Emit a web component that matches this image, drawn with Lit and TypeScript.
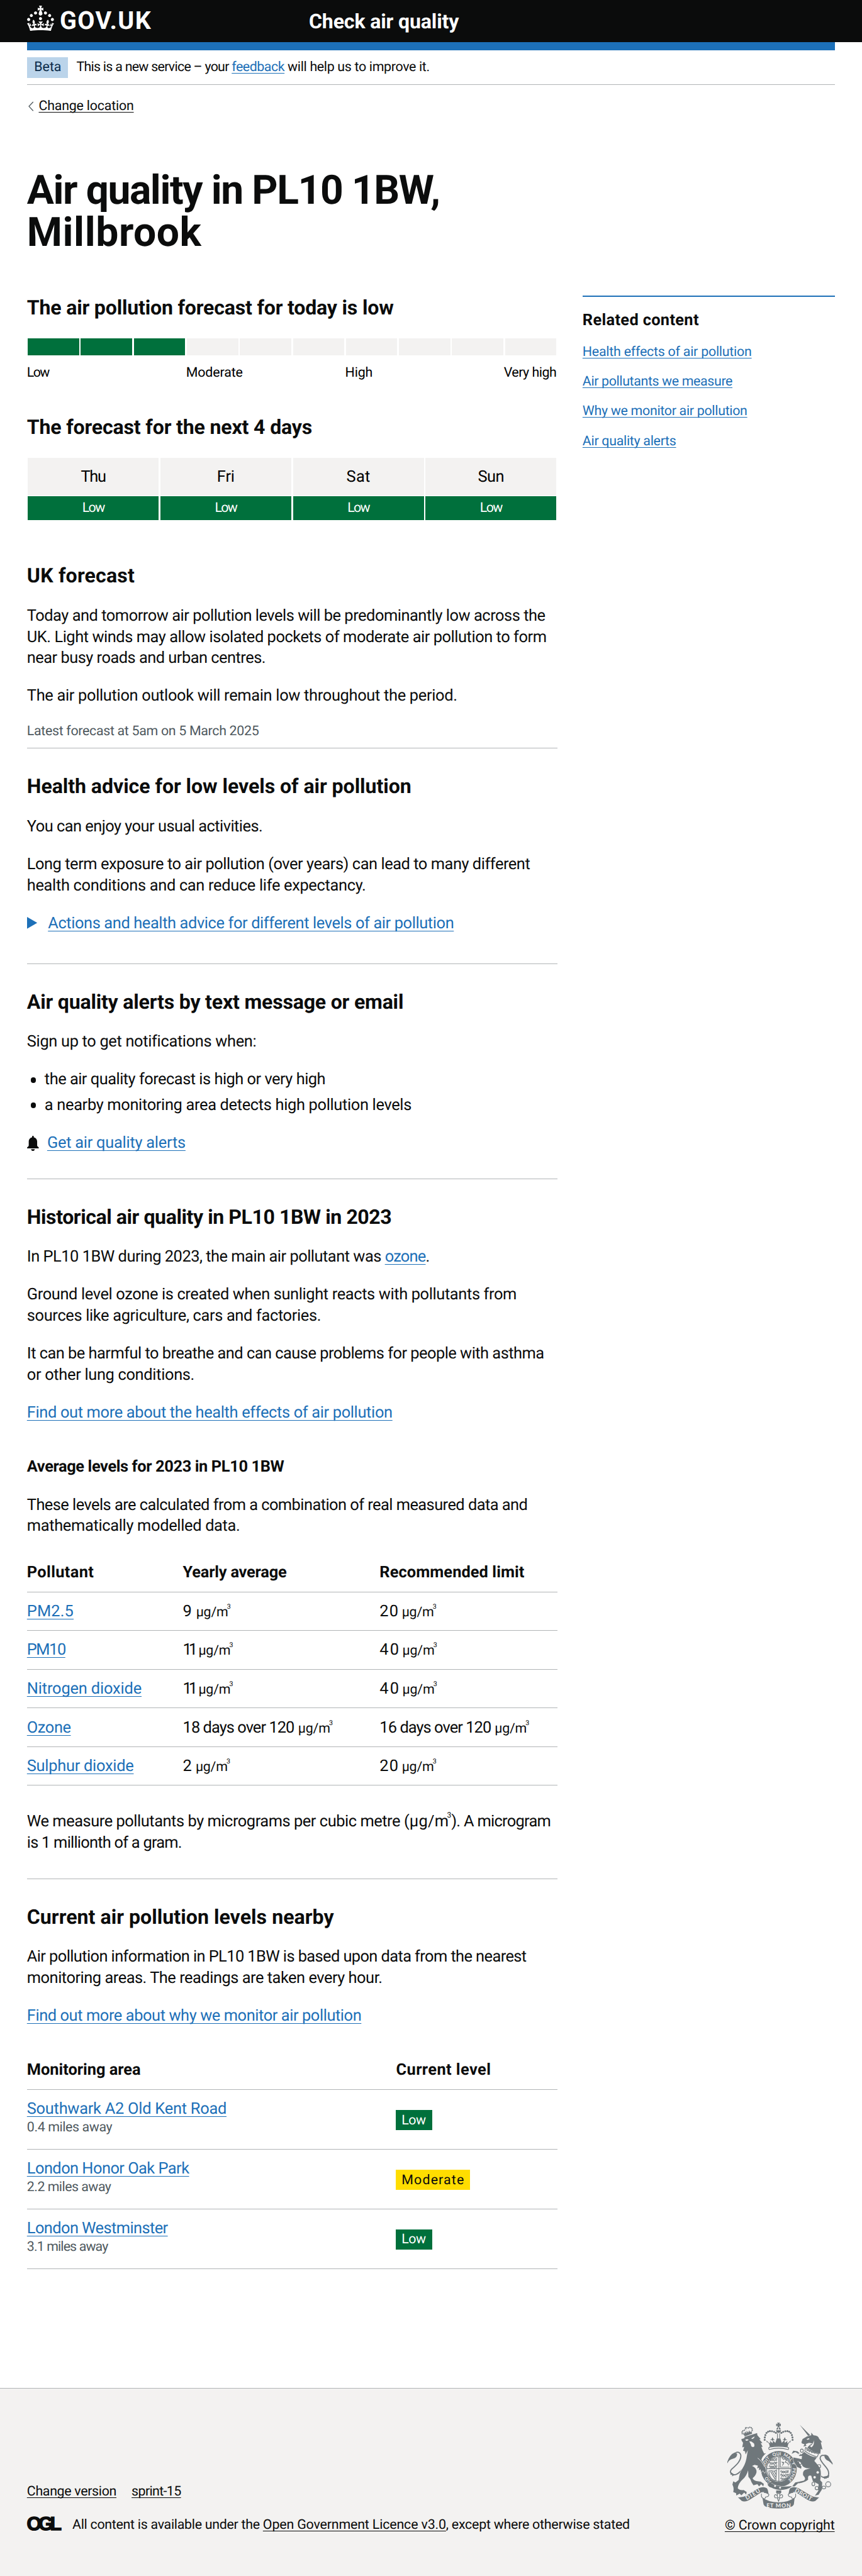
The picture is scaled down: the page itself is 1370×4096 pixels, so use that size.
import { LitElement, html, css, svg } from "lit";
import type { TemplateResult } from "lit";
import { customElement, property } from "lit/decorators.js";
import { classMap } from "lit/directives/class-map.js";

const FAMILY = 'Roboto, "Liberation Sans", Arial, sans-serif';
const pen = document.createElement("canvas").getContext("2d")!;

/**
 * A run of text set to a given measure: the tracking is worked out so that the
 * last glyph ends `width` pixels after the run's start. A run that ends in a
 * space is measured with that space.
 */
function run(text: string, width: number, size = 19, weight = 400): TemplateResult {
  pen.font = `${weight} ${size}px ${FAMILY}`;
  const m = pen.measureText(text);
  const open = text.endsWith(" ");
  const natural = open ? m.width : m.actualBoundingBoxRight;
  const gaps = open ? text.length : Math.max(1, text.length - 1);
  const tracking = ((width - natural) / gaps).toFixed(3);
  return html`<span class="run" style="letter-spacing:${tracking}px">${text}</span>`;
}

const base = css`
  :host {
    display: block;
  }
  *,
  *::before,
  *::after {
    box-sizing: border-box;
  }
  p,
  h1,
  h2,
  h3,
  ul {
    margin: 0;
    padding: 0;
  }
  .run {
    white-space: pre;
  }
  .line {
    display: block;
    white-space: nowrap;
  }
  .link {
    color: #1d70b8;
    text-decoration: underline;
    text-decoration-thickness: 1px;
    text-underline-offset: 0.15em;
    text-decoration-skip-ink: none;
  }
  .link.dark {
    color: #0b0c0c;
  }
  h2 {
    font-size: 24px;
    line-height: 30px;
    font-weight: 700;
  }
  h3 {
    font-size: 19px;
    line-height: 25px;
    font-weight: 700;
  }
  p {
    margin-top: 20px;
  }
  .small {
    font-size: 16px;
    line-height: 20px;
  }
  .muted {
    color: #505a5f;
  }
`;

@customElement("site-header")
export class SiteHeader extends LitElement {
  static styles = [
    base,
    css`
      .bar {
        height: 50px;
        padding: 7px 32px 0;
        background: #0b0c0c;
        color: #fff;
        display: grid;
        grid-template-columns: 335px 1fr;
        font-weight: 700;
      }
      .brand {
        display: flex;
        gap: 7px;
      }
      .crown {
        width: 32px;
        height: 30px;
        fill: #fff;
        display: block;
      }
      .name {
        font-size: 29.5px;
        line-height: 30px;
        margin-top: 2.8px;
      }
      .service {
        font-size: 24px;
        line-height: 30px;
        margin-top: 3.1px;
      }
      .stripe {
        height: 10px;
        margin: 0 32px;
        background: #1d70b8;
      }
    `,
  ];

  render() {
    return html`
      <div class="bar">
        <div class="brand">
          <svg class="crown" viewBox="0 0 32 30">
            <path
              d="M22.6 10.4c-1 .4-2-.1-2.4-1-.4-.9.1-2 1-2.4.9-.4 2 .1 2.4 1s-.1 2-1 2.4m-5.9 6.7c-.9.4-2-.1-2.4-1-.4-.9.1-2 1-2.4.9-.4 2 .1 2.4 1s-.1 2-1 2.4m10.8-3.7c-1 .4-2-.1-2.4-1-.4-.9.1-2 1-2.4.9-.4 2 .1 2.4 1s0 2-1 2.4m3.3 4.8c-1 .4-2-.1-2.4-1-.4-.9.1-2 1-2.4.9-.4 2 .1 2.4 1s-.1 2-1 2.4M17 4.7l2.3 1.2V2.5l-2.3.7-.2-.2.9-3h-3.4l.9 3-.2.2c-.1.1-2.3-.7-2.3-.7v3.4L15 4.7c.1.1.1.2.2.2l-1.3 4c-.1.2-.1.4-.1.6 0 1.1.8 2 1.9 2.2h.7c1-.2 1.9-1.1 1.9-2.1 0-.2 0-.4-.1-.6l-1.3-4c-.1-.2 0-.2.1-.3m-7.6 5.7c.9.4 2-.1 2.4-1 .4-.9-.1-2-1-2.4-.9-.4-2 .1-2.4 1s0 2 1 2.4m-5 3c.9.4 2-.1 2.4-1 .4-.9-.1-2-1-2.4-.9-.4-2 .1-2.4 1s.1 2 1 2.4m-3.2 4.8c.9.4 2-.1 2.4-1 .4-.9-.1-2-1-2.4-.9-.4-2 .1-2.4 1s0 2 1 2.4m14.8 11c4.4 0 8.6.3 12.3.8 1.1-4.5 2.4-7 3.7-8.8l-2.5-.9c.2 1.3.3 1.9 0 2.7-.4-.4-.8-1.1-1.1-2.3l-1.2 4c.7-.5 1.3-.8 2-.9-1.1 2.5-2.6 3.1-3.5 3-1.1-.2-1.7-1.2-1.5-2.1.3-1.2 1.5-1.5 2.1-.1 1.1-2.3-.8-3-2-2.3 1.9-1.9 2.1-3.5.6-5.6-2.1 1.6-2.1 3.2-1.2 5.5-1.2-1.4-3.2-.6-2.5 1.6.9-1.4 2.1-.5 1.9.8-.2 1.1-1.7 2.1-3.5 1.9-2.7-.2-2.9-2.1-2.9-3.6.7-.1 1.9.5 2.9 1.9l.4-4.3c-1.1 1.1-2.1 1.4-3.2 1.4.4-1.2 2.1-3 2.1-3h-5.4s1.7 1.9 2.1 3c-1.1 0-2.1-.2-3.2-1.4l.4 4.3c1-1.4 2.2-2 2.9-1.9-.1 1.5-.2 3.4-2.9 3.6-1.9.2-3.4-.8-3.5-1.9-.2-1.3 1-2.2 1.9-.8.7-2.3-1.2-3-2.5-1.6.9-2.2.9-3.9-1.2-5.5-1.5 2-1.3 3.7.6 5.6-1.2-.7-3.1 0-2 2.3.6-1.4 1.8-1.1 2.1.1.2.9-.3 1.9-1.5 2.1-.9.2-2.4-.5-3.5-3 .6 0 1.2.3 2 .9l-1.2-4c-.3 1.1-.7 1.9-1.1 2.3-.3-.8-.2-1.4 0-2.7l-2.9.9C1.3 23 2.6 25.5 3.7 30c3.7-.5 7.9-.8 12.3-.8"
            />
          </svg>
          <div class="name">${run("GOV.UK", 108.6, 29.5, 700)}</div>
        </div>
        <div class="service">${run("Check air quality", 179.2, 24, 700)}</div>
      </div>
      <div class="stripe"></div>
    `;
  }
}

@customElement("phase-banner")
export class PhaseBanner extends LitElement {
  static styles = [
    base,
    css`
      .banner {
        display: flex;
        height: 41px;
        margin: 0 32px;
        padding: 8px 0 7px;
        border-bottom: 1px solid #b1b4b6;
      }
      .tag {
        width: 48.4px;
        height: 25px;
        padding: 2.6px 0 0 8.6px;
        background: #bbd4ea;
        color: #0c2d4a;
      }
      .text {
        margin: 2.6px 0 0 10.4px;
      }
      .back {
        display: flex;
        margin: 15.3px 32px 0;
      }
      .chevron {
        width: 14px;
        height: 20px;
        flex: none;
      }
    `,
  ];

  render() {
    return html`
      <div class="banner small">
        <div class="tag">${run("Beta", 31.6, 16)}</div>
        <div class="text line">
          ${run("This is a new service – your ", 184.6, 16)}<a class="link"
            >${run("feedback", 64, 16)}</a
          >${run(" will help us to improve it.", 171.6, 16)}
        </div>
      </div>
      <div class="back small">
        <svg class="chevron" viewBox="0 0 14 20">
          <path
            d="M7.3 4.5 2.3 9.8 7.3 15.1"
            fill="none"
            stroke="#505a5f"
            stroke-width="1"
          />
        </svg>
        <a class="link dark">${run("Change location", 112.3, 16)}</a>
      </div>
    `;
  }
}

@customElement("daqi-bar")
export class DaqiBar extends LitElement {
  @property({ type: Number }) value = 3;

  static styles = [
    base,
    css`
      .cells {
        display: grid;
        grid-template-columns: repeat(10, 1fr);
        height: 20px;
      }
      .cell {
        margin: 0 1px;
        background: #f3f2f1;
      }
      .cell.on {
        background: #00703c;
      }
      .scale {
        display: grid;
        grid-template-columns: 189px 189px 188.5px 1fr;
        margin-top: 11.7px;
        color: #000;
      }
    `,
  ];

  render() {
    return html`
      <div class="cells">
        ${Array.from(
          { length: 10 },
          (_, i) =>
            html`<div class=${classMap({ cell: true, on: i < this.value })}></div>`
        )}
      </div>
      <div class="scale small">
        <div>${run("Low", 27.3, 16)}</div>
        <div>${run("Moderate", 67, 16)}</div>
        <div>${run("High", 32, 16)}</div>
        <div>${run("Very high", 62, 16)}</div>
      </div>
    `;
  }
}

@customElement("day-forecast")
export class DayForecast extends LitElement {
  days: [string, number][] = [
    ["Thu", 30],
    ["Fri", 20.5],
    ["Sat", 28],
    ["Sun", 31],
  ];

  static styles = [
    base,
    css`
      .grid {
        display: grid;
        grid-template-columns: repeat(4, 1fr);
      }
      .day {
        margin: 0 1px;
        text-align: center;
      }
      .name {
        height: 45px;
        padding-top: 10.4px;
        background: #f3f2f1;
        color: #000;
        line-height: 25px;
      }
      .level {
        height: 28px;
        margin-top: 1px;
        padding-top: 4.5px;
        background: #00703c;
        color: #fff;
      }
    `,
  ];

  render() {
    return html`<div class="grid">
      ${this.days.map(
        ([name, w]) => html`<div class="day">
          <div class="name">${run(name, w)}</div>
          <div class="level small">${run("Low", 27.3, 16)}</div>
        </div>`
      )}
    </div>`;
  }
}

interface Reading {
  text: string;
  /** Width of the figures alone, and the distance from their start to the unit. */
  width: number;
  step: number;
}
interface Pollutant {
  name: string;
  width: number;
  yearly: Reading;
  limit: Reading;
}

@customElement("pollutant-table")
export class PollutantTable extends LitElement {
  rows: Pollutant[] = [
    { name: "PM2.5", width: 54.7, yearly: { text: "9", width: 10.8, step: 15.8 }, limit: { text: "20", width: 21.5, step: 26.4 } },
    { name: "PM10", width: 46, yearly: { text: "11", width: 13.8, step: 18.6 }, limit: { text: "40", width: 22.2, step: 27.1 } },
    { name: "Nitrogen dioxide", width: 136.3, yearly: { text: "11", width: 13.8, step: 18.6 }, limit: { text: "40", width: 22.2, step: 27.1 } },
    { name: "Ozone", width: 52.4, yearly: { text: "18 days over 120", width: 132.3, step: 137 }, limit: { text: "16 days over 120", width: 132.3, step: 136.7 } },
    { name: "Sulphur dioxide", width: 127, yearly: { text: "2", width: 10.6, step: 15.2 }, limit: { text: "20", width: 21.5, step: 26.4 } },
  ];

  static styles = [
    base,
    css`
      .row {
        display: grid;
        grid-template-columns: 185.2px 233.8px 1fr;
        height: 46px;
        padding-top: 10.6px;
        border-bottom: 1px solid #b1b4b6;
        line-height: 25px;
        white-space: nowrap;
      }
      .head {
        height: 36px;
        padding-top: 0;
        font-weight: 700;
      }
      .reading {
        display: flex;
        align-items: baseline;
      }
      .figure {
        flex: none;
      }
      .unit {
        font-size: 16px;
      }
      .cube {
        font-size: 8px;
        line-height: 8px;
        margin-left: -1.4px;
        transform: translateY(-9.2px);
      }
    `,
  ];

  private reading(r: Reading) {
    return html`<div class="reading">
      <span class="figure" style="width:${r.step}px">${run(r.text, r.width)}</span
      ><span class="unit">${run("µg/m", 37.2, 16)}</span><span class="cube">3</span>
    </div>`;
  }

  render() {
    return html`
      <div class="row head">
        <div>${run("Pollutant", 79.9, 19, 700)}</div>
        <div>${run("Yearly average", 123.2, 19, 700)}</div>
        <div>${run("Recommended limit", 172.6, 19, 700)}</div>
      </div>
      ${this.rows.map(
        (r) => html`<div class="row">
          <div><a class="link">${run(r.name, r.width)}</a></div>
          ${this.reading(r.yearly)} ${this.reading(r.limit)}
        </div>`
      )}
    `;
  }
}

interface Station {
  name: string;
  width: number;
  away: string;
  awayWidth: number;
  level: "Low" | "Moderate";
}

@customElement("station-table")
export class StationTable extends LitElement {
  rows: Station[] = [
    { name: "Southwark A2 Old Kent Road", width: 236.7, away: "0.4 miles away", awayWidth: 102, level: "Low" },
    { name: "London Honor Oak Park", width: 193.5, away: "2.2 miles away", awayWidth: 100.8, level: "Moderate" },
    { name: "London Westminster", width: 168.4, away: "3.1 miles away", awayWidth: 97.3, level: "Low" },
  ];

  static styles = [
    base,
    css`
      .row {
        display: grid;
        grid-template-columns: 438.5px 1fr;
        height: 71px;
        padding-top: 10.3px;
        border-bottom: 1px solid #b1b4b6;
        line-height: 25px;
      }
      .head {
        height: 36px;
        padding-top: 0;
        font-weight: 700;
      }
      .tag {
        width: 43px;
        height: 24px;
        margin-top: 13.7px;
        padding: 2.4px 0 0 6.6px;
        background: #00703c;
        color: #fff;
      }
      .tag.moderate {
        width: 87.5px;
        background: #ffdd00;
        color: #0b0c0c;
      }
    `,
  ];

  render() {
    return html`
      <div class="row head">
        <div>${run("Monitoring area", 135, 19, 700)}</div>
        <div>${run("Current level", 111.5, 19, 700)}</div>
      </div>
      ${this.rows.map((r) => {
        const moderate = r.level === "Moderate";
        return html`<div class="row">
          <div>
            <a class="link line">${run(r.name, r.width)}</a>
            <span class="line small muted">${run(r.away, r.awayWidth, 16)}</span>
          </div>
          <div class=${classMap({ tag: true, small: true, moderate })}>
            ${run(r.level, moderate ? 73.6 : 29, 16)}
          </div>
        </div>`;
      })}
    `;
  }
}

@customElement("related-content")
export class RelatedContent extends LitElement {
  links: [string, number][] = [
    ["Health effects of air pollution", 200.4],
    ["Air pollutants we measure", 178],
    ["Why we monitor air pollution", 195.2],
    ["Air quality alerts", 111.2],
  ];

  static styles = [
    base,
    css`
      .box {
        border-top: 2px solid #1d70b8;
        padding-top: 15.8px;
      }
      .list {
        display: grid;
        gap: 15.4px;
        margin-top: 15.3px;
      }
    `,
  ];

  render() {
    return html`<div class="box">
      <h3>${run("Related content", 138.7, 19, 700)}</h3>
      <div class="list small">
        ${this.links.map(([t, w]) => html`<div><a class="link">${run(t, w, 16)}</a></div>`)}
      </div>
    </div>`;
  }
}

const beads: [number, number][] = [
  [530, 296], [531, 279], [535, 262], [543, 247], [554, 238], [567, 234], [582, 235], [597, 239], [610, 246],
];
const lionBeads: [number, number][] = [
  [370, 252], [369, 241], [375, 232], [386, 227], [413, 211], [424, 207], [435, 210], [441, 219], [441, 230],
];

@customElement("royal-arms")
export class RoyalArms extends LitElement {
  static styles = css`
    :host {
      display: block;
      width: 125px;
      height: 102.4px;
    }
    .arms {
      display: block;
      width: 100%;
      height: 100%;
      overflow: visible;
    }
    .f {
      fill: #6f777b;
    }
    .b {
      fill: #f3f2f1;
    }
    .edge {
      fill: #6f777b;
      stroke: #f3f2f1;
      stroke-width: 5;
      paint-order: stroke;
    }
    .s {
      fill: none;
      stroke: #6f777b;
      stroke-width: 5;
    }
    .thick {
      stroke-width: 8;
    }
    .w {
      fill: none;
      stroke: #f3f2f1;
      stroke-width: 4;
    }
    .motto {
      fill: #f3f2f1;
      font: 700 31px Lato, "Liberation Sans", sans-serif;
    }
    .ribbon {
      font-size: 40px;
    }
  `;

  private scroll() {
    return svg`
      <path class="f" d="M340 706Q374 708 398 694L484 643Q520 626 546 641Q556 655 557 683Q530 662 503 672L432 718Q392 744 366 731Z" />
      <path class="s" d="M508 680Q502 702 518 714Q534 722 536 704Q560 702 560 686Q548 672 524 671" />`;
  }

  private lions(x: number, y: number) {
    return svg`<g transform="translate(${x} ${y})">
      ${[0, 25, 50].map(
        (dy) => svg`<path class="s" d="M2 ${dy + 8}q6-8 14-2l8-2 8 3 12-6 10 4 8-4M8 ${dy + 18}l8-7 8 5 8-6 8 7 8-7 12 6M4 ${dy}l8 3M52 ${dy}l10 4" />`
      )}</g>`;
  }

  render() {
    return html`<svg class="arms" viewBox="264 173 750 614">
      <defs>
        <path id="ring" d="M631 604A99 99 0 1 1 631.1 604" />
      </defs>

      <circle class="f" cx="631" cy="504" r="128" />
      <circle class="b" cx="631" cy="504" r="92" />
      <circle class="s" cx="631" cy="504" r="87" />
      <text class="motto"><textPath href="#ring" startOffset="53">HO</textPath></text>
      <text class="motto"><textPath href="#ring" startOffset="173">SOIT</textPath></text>
      <text class="motto"><textPath href="#ring" startOffset="268">QUI</textPath></text>
      <text class="motto"><textPath href="#ring" startOffset="342">MAL</textPath></text>
      <text class="motto"><textPath href="#ring" startOffset="420">Y</textPath></text>
      <text class="motto"><textPath href="#ring" startOffset="458">PENSE</textPath></text>
      <path class="s" d="M631 417V610M544 502H718" />
      ${this.lions(558, 430)} ${this.lions(640, 516)}
      <path class="s" d="M641 410V491H708M653 425l12 12 10-6 10 10-8 14 18 8 6 16M655 480l10-14-10-10 14 2" />
      <path class="s" d="M560 518Q562 580 610 588L614 512Q600 524 580 516ZM572 522L606 578M584 522L609 562M598 520L612 545" />

      <path class="edge" d="M566 592Q600 640 728 626Q690 655 640 654Q590 650 552 620Z" />
      <circle class="b" cx="604" cy="625" r="7" />
      <circle class="b" cx="640" cy="637" r="7" />
      <path class="s" d="M552 598q14-18 34-6-20 10-14 40-16-4-20-34z" />

      <path class="edge" d="M548 306Q565 322 566 346Q629 336 694 346Q695 322 712 306L690 322 692 304 674 318 670 300 652 318 646 300 642 286H616L612 300 606 318 590 302 586 320 568 304 570 322Z" />
      <path class="f" d="M586 277l7 15-7 14-7-14zM673 277l7 15-7 14-7-14z" />
      <path class="s" d="M562 366Q552 350 570 347Q629 338 690 347Q708 350 698 366Q629 346 562 366Z" />
      <path class="s" d="M621 250V286M637 250V286M571 296H600M660 296H688" />
      <path class="f" d="M611 228H647Q644 246 629 247Q614 246 611 228ZM612 222Q618 208 626 208V222ZM646 222Q640 208 632 208V222Z" />
      <path class="f" d="M619 174H639L633 186 645 180V200L633 194 639 207H619L625 194 612 200V180L625 186Z" />
      ${beads.map(
        ([x, y]) => svg`<circle class="f" cx=${x} cy=${y} r="7" /><circle class="f" cx=${1259 - x} cy=${y} r="7" />`
      )}
      <path class="f" d="M540 300l12 8-4 10zM718 300l-12 8 4 10z" />

      <path class="s thick" d="M372 505Q335 550 305 545Q275 530 292 508C325 478 364 446 360 405Q352 376 322 388" />
      <path class="f" d="M264 464V452Q282 400 318 386L334 396Q334 424 304 431Q276 436 264 464ZM284 524l4 22 12-4-4 14 22-10z" />
      <path class="edge" d="M364 291L384 285 388 275 476 248 478 264 502 290 492 293 514 319 502 320 516 346 506 347Q514 372 526 394L540 391Q514 412 506 438L526 466 541 518 530 532 518 515 506 528 500 506 490 514 490 494 476 500 482 480 458 474 440 482Q474 495 472 527Q466 552 444 570Q450 584 470 590L502 594 524 610 520 628 506 612 490 628 478 612 450 620Q434 600 428 578L414 560 412 514Q400 556 374 578Q342 606 338 642Q352 658 380 654L402 668 398 686 384 672 364 692 352 680 328 693 326 676 306 668Q314 640 300 616L306 592 322 600 345 582Q350 530 372 500Q392 470 400 430L410 370 394 400 390 378 376 374 384 345 370 350 376 318 366 302Z" />
      <path class="w" d="M480 426Q510 446 530 490" />
      <path class="b" d="M392 294q12-4 24 0-6 10-20 8zM434 286l24-14q-2 16-16 18zM420 306l16 2 18 14q8 24-6 26-16 0-16-18z" />
      <path class="f" d="M384 264L440 244V252L388 272ZM380 262l-4-18 10 8 4-16 10 14 2-20 10 16 8-18 6 14 10-10 2 20z" />
      <path class="s" d="M396 204v18M388 214l18-6" />
      ${lionBeads.map(([x, y]) => svg`<circle class="f" cx=${x} cy=${y} r="5" />`)}

      <path class="s thick" d="M905 520Q930 570 970 568Q992 550 984 520C976 490 930 460 925 428Q928 400 956 408" />
      <path class="f" d="M955 402Q982 402 990 424L1014 462V474Q996 450 974 442Q954 430 955 402ZM945 560l14 16 8-12 18 4 6-20-20 6z" />
      <path class="f" d="M780 189L858 266 846 276Z" />
      <path class="edge" d="M792 314L800 290 832 272 862 264 862 245 878 264Q914 266 918 288L940 313 930 314 942 366 930 360 926 396Q872 386 834 352Q850 330 872 322L846 318 822 326 828 338 806 344 814 328 796 322Z" />
      <path class="b" d="M828 290l18-6 4 6-14 6zM852 340q24-8 28-40 6 34-16 50z" />
      <path class="edge" d="M812 382Q850 414 902 422L884 446Q910 474 924 498Q936 530 926 584L940 600 938 650 914 688 888 694 912 660 914 612 874 592 862 552Q834 544 840 580Q812 604 768 606L744 628H726L748 600 808 588Q830 576 804 548Q798 512 832 506L858 498Q812 502 798 480Q790 450 764 446L792 486 790 502 762 490 736 448 734 422 794 434 796 410 778 412 764 392 748 384 722 396 734 374 764 378 790 402Z" />
      <path class="s" d="M822 350Q862 386 914 396L904 418Q856 406 816 376Z" />
      <path class="s" d="M830 360l2 14 10-6 6 14 10-8 8 14 10-8 8 12 12-6" />
      <ellipse class="s" cx="795" cy="374" rx="10" ry="12" />
      <ellipse class="s" cx="784" cy="458" rx="12" ry="13" />
      <circle class="s" cx="917" cy="484" r="12" />
      <circle class="b" cx="908" cy="528" r="9" />
      <circle class="b" cx="886" cy="563" r="9" />
      <ellipse class="s" cx="877" cy="611" rx="10" ry="13" />
      <circle class="s" cx="902" cy="640" r="12" />
      <ellipse class="s" cx="952" cy="636" rx="13" ry="10" />
      <circle class="s" cx="983" cy="613" r="18" />
      <circle class="b" cx="776" cy="398" r="7" />

      ${this.scroll()}
      <g transform="translate(1258 0) scale(-1 1)">${this.scroll()}</g>
      <path class="f" d="M514 708Q552 740 629 742Q706 740 744 708L738 756Q728 786 629 786Q532 786 522 756Z" />
      <text class="motto ribbon" transform="translate(403 726) rotate(-31)" textLength="115">DIEU</text>
      <text class="motto ribbon" x="543" y="777" textLength="173">ET MON</text>
      <text class="motto ribbon" transform="translate(742 664) rotate(30)" textLength="134">DROIT</text>
      <path class="f" d="M612 657H648V674L640 682 629 668 618 682 612 674Z" />
      <path class="s" d="M629 672Q614 690 623 706Q616 682 604 688Q594 698 606 710H620L629 734 638 710H652Q664 698 654 688Q642 682 635 706Q644 690 629 672ZM610 710H648" />
    </svg>`;
  }
}

@customElement("site-footer")
export class SiteFooter extends LitElement {
  static styles = [
    base,
    css`
      .footer {
        display: flex;
        justify-content: space-between;
        height: 223.6px;
        padding: 0 32px;
        border-top: 1px solid #b1b4b6;
        background: #f3f2f1;
      }
      .meta {
        padding-top: 112.8px;
      }
      .links {
        display: flex;
        gap: 18px;
      }
      .licence {
        display: flex;
        margin-top: 20px;
      }
      .ogl {
        width: 41px;
        height: 17px;
        margin: 0 13px 0 0;
        flex: none;
        overflow: visible;
        fill: #0b0c0c;
        stroke: #0b0c0c;
        stroke-width: 1.1;
        font: 700 22.6px "Liberation Sans", sans-serif;
      }
      .crown {
        display: flex;
        flex-direction: column;
        width: 131px;
        padding: 40.2px 0 0;
      }
      .arms {
        margin-left: 3px;
      }
      .copy {
        margin-top: 10.4px;
      }
    `,
  ];

  render() {
    return html`<div class="footer small">
      <div class="meta">
        <div class="links">
          <a class="link dark">${run("Change version", 105.8, 16)}</a>
          <a class="link dark">${run("sprint-15", 59.2, 16)}</a>
        </div>
        <div class="licence">
          <svg class="ogl" viewBox="0 0 41 17">
            <text x="-0.3" y="16" textLength="41.5">OGL</text>
          </svg>
          <div class="line">
            ${run("All content is available under the ", 226.5, 16)}<a class="link dark"
              >${run("Open Government Licence v3.0", 217.8, 16)}</a
            >${run(", except where otherwise stated", 217.6, 16)}
          </div>
        </div>
      </div>
      <div class="crown">
        <royal-arms class="arms"></royal-arms>
        <a class="link dark copy">${run("© Crown copyright", 130.5, 16)}</a>
      </div>
    </div>`;
  }
}

@customElement("app-root")
export class AppRoot extends LitElement {
  static styles = [
    base,
    css`
      :host {
        zoom: 1.33789;
        width: 1024px;
        overflow: hidden;
        background: #fff;
        color: #0b0c0c;
        font-family: Roboto, "Liberation Sans", Arial, sans-serif;
        font-size: 19px;
        line-height: 25px;
        text-rendering: geometricPrecision;
        -webkit-font-smoothing: antialiased;
      }
      .page {
        padding: 0 32px;
      }
      .title {
        margin-top: 64.7px;
        font-size: 48px;
        line-height: 50px;
      }
      .columns {
        display: grid;
        grid-template-columns: 630px 300px;
        justify-content: space-between;
        height: 2537px;
      }
      .main {
        padding-top: 49.8px;
      }
      .aside {
        padding-top: 50px;
      }
      .bar {
        display: block;
        margin-top: 21.2px;
      }
      .next {
        margin-top: 38.9px;
      }
      .days {
        display: block;
        margin-top: 21.4px;
      }
      .outlook {
        margin-top: 50.8px;
      }
      h2 + p {
        margin-top: 20.5px;
      }
      h2 + p.first {
        margin-top: 21.2px;
      }
      .rule {
        height: 0;
        margin-bottom: 1.25px;
        border-top: 1px solid #b1b4b6;
      }
      .rule.tight {
        margin-top: 9.1px;
      }
      .rule + h2 {
        margin-top: 29.9px;
      }
      .rule.wide {
        margin-top: 29.5px;
      }
      .rule.wider {
        margin-top: 34.7px;
      }
      .details {
        display: flex;
        margin-top: 20px;
      }
      .arrow {
        width: 12px;
        height: 14px;
        margin: 4.6px 13px 0 0;
        fill: #1d70b8;
      }
      .list {
        list-style: none;
        margin-top: 20px;
        display: grid;
        gap: 5px;
      }
      .item {
        display: flex;
      }
      .dot {
        width: 6.4px;
        height: 6.4px;
        margin: 9.5px 10.3px 0 4.3px;
        border-radius: 50%;
        background: #0b0c0c;
      }
      .alerts {
        display: flex;
      }
      .bell {
        width: 14px;
        height: 18px;
        margin: 4px 10px 0 0;
        fill: #0b0c0c;
      }
      .average {
        margin-top: 39.7px;
      }
      .pollutants {
        display: block;
        margin-top: 30px;
      }
      .measure {
        margin-top: 30.5px;
      }
      .stations {
        display: block;
        margin-top: 39.5px;
      }
      .cube {
        display: inline-block;
        width: 5px;
        font-size: 9px;
        line-height: 9px;
        margin-left: -2px;
        transform: translateY(-10.5px);
      }
    `,
  ];

  render() {
    return html`
      <site-header></site-header>
      <phase-banner></phase-banner>
      <div class="page">
        <h1 class="title">
          <span class="line">${run("Air quality in PL10 1BW,", 489.6, 48, 700)}</span>
          <span class="line">${run("Millbrook", 208.5, 48, 700)}</span>
        </h1>
        <div class="columns">
          <main class="main">
            <h2>${run("The air pollution forecast for today is low", 436.3, 24, 700)}</h2>
            <daqi-bar class="bar" .value=${3}></daqi-bar>
            <h2 class="next">${run("The forecast for the next 4 days", 338.8, 24, 700)}</h2>
            <day-forecast class="days"></day-forecast>

            <h2 class="outlook">${run("UK forecast", 127.8, 24, 700)}</h2>
            <p class="first">
              <span class="line"
                >${run("Today and tomorrow air pollution levels will be predominantly low across the", 616.3)}</span
              >
              <span class="line"
                >${run("UK. Light winds may allow isolated pockets of moderate air pollution to form", 617.2)}</span
              >
              <span class="line">${run("near busy roads and urban centres.", 282.9)}</span>
            </p>
            <p>${run("The air pollution outlook will remain low throughout the period.", 510.6)}</p>
            <p class="small muted">${run("Latest forecast at 5am on 5 March 2025", 275.9, 16)}</p>
            <div class="rule tight"></div>

            <h2>${run("Health advice for low levels of air pollution", 456.4, 24, 700)}</h2>
            <p>${run("You can enjoy your usual activities.", 279.4)}</p>
            <p>
              <span class="line"
                >${run("Long term exposure to air pollution (over years) can lead to many different", 598)}</span
              >
              <span class="line">${run("health conditions and can reduce life expectancy.", 402)}</span>
            </p>
            <div class="details">
              <svg class="arrow" viewBox="0 0 12 14"><path d="M0 0 12 7 0 14z" /></svg>
              <a class="link"
                >${run("Actions and health advice for different levels of air pollution", 482.2)}</a
              >
            </div>
            <div class="rule wider"></div>

            <h2>${run("Air quality alerts by text message or email", 446.3, 24, 700)}</h2>
            <p>${run("Sign up to get notifications when:", 271.6)}</p>
            <ul class="list">
              <li class="item">
                <span class="dot"></span>${run("the air quality forecast is high or very high", 333.6)}
              </li>
              <li class="item">
                <span class="dot"></span>${run("a nearby monitoring area detects high pollution levels", 435.5)}
              </li>
            </ul>
            <p class="alerts">
              <svg class="bell" viewBox="0 0 14 18">
                <path
                  d="M7 0a1 1 0 0 1 1 1v.8c2.4.4 4 2.4 4 5V11.4c0 .9.6 1.4 1.4 1.9.8.6.8 1.7-.2 1.7H.8c-1 0-1-1.1-.2-1.7C1.4 12.8 2 12.3 2 11.4V6.8c0-2.6 1.6-4.6 4-5V1A1 1 0 0 1 7 0zM4.8 15.8h4.4c0 1.2-1 2.2-2.2 2.2s-2.2-1-2.2-2.2z"
                />
              </svg>
              <a class="link">${run("Get air quality alerts", 163.9)}</a>
            </p>
            <div class="rule wide"></div>

            <h2>${run("Historical air quality in PL10 1BW in 2023", 432.9, 24, 700)}</h2>
            <p class="line">
              ${run("In PL10 1BW during 2023, the main air pollutant was ", 425.4)}<a class="link"
                >${run("ozone", 49)}</a
              >${run(".", 3.6)}
            </p>
            <p>
              <span class="line"
                >${run("Ground level ozone is created when sunlight reacts with pollutants from", 581.6)}</span
              >
              <span class="line">${run("sources like agriculture, cars and factories.", 348.7)}</span>
            </p>
            <p>
              <span class="line"
                >${run("It can be harmful to breathe and can cause problems for people with asthma", 614.6)}</span
              >
              <span class="line">${run("or other lung conditions.", 198.3)}</span>
            </p>
            <p>
              <a class="link">${run("Find out more about the health effects of air pollution", 434.2)}</a>
            </p>

            <h3 class="average">${run("Average levels for 2023 in PL10 1BW", 306.2, 19, 700)}</h3>
            <p>
              <span class="line"
                >${run("These levels are calculated from a combination of real measured data and", 594.6)}</span
              >
              <span class="line">${run("mathematically modelled data.", 252.5)}</span>
            </p>
            <pollutant-table class="pollutants"></pollutant-table>
            <p class="measure">
              <span class="line"
                >${run("We measure pollutants by micrograms per cubic metre ", 448)}${run(
                  "(µg/m",
                  52.5
                )}<span class="cube">3</span>${run("). A microgram", 118)}</span
              >
              <span class="line">${run("is 1 millionth of a gram.", 183.5)}</span>
            </p>
            <div class="rule wide"></div>

            <h2>${run("Current air pollution levels nearby", 365.7, 24, 700)}</h2>
            <p>
              <span class="line"
                >${run("Air pollution information in PL10 1BW is based upon data from the nearest", 593.8)}</span
              >
              <span class="line">${run("monitoring areas. The readings are taken every hour.", 422)}</span>
            </p>
            <p>
              <a class="link">${run("Find out more about why we monitor air pollution", 397.3)}</a>
            </p>
            <station-table class="stations"></station-table>
          </main>
          <aside class="aside"><related-content></related-content></aside>
        </div>
      </div>
      <site-footer></site-footer>
    `;
  }
}
